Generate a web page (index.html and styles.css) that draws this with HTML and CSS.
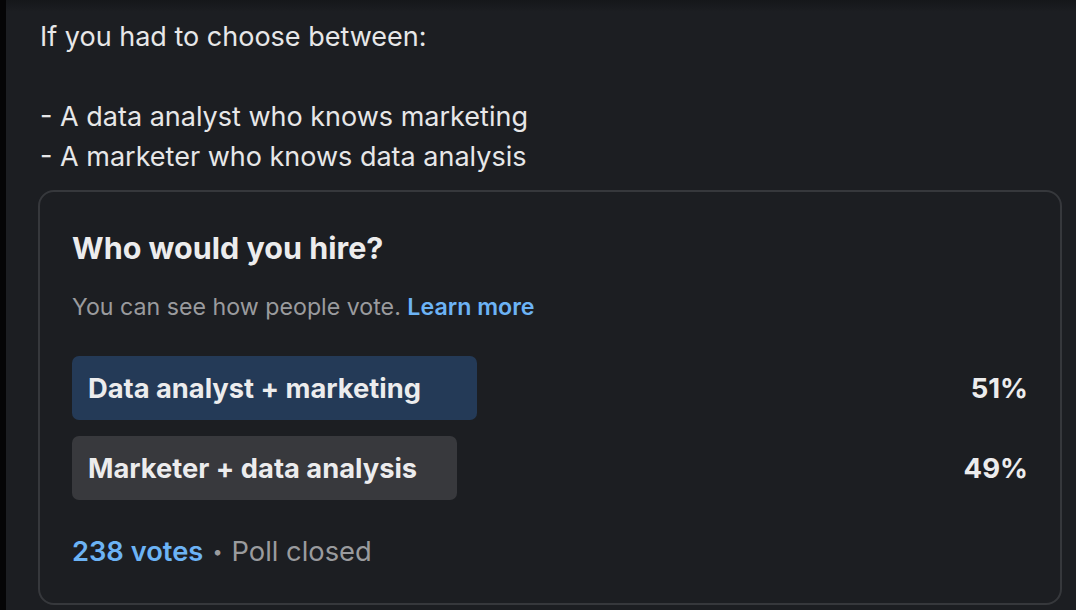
FILE: index.html
```html
<!DOCTYPE html>
<html lang="en">
<head>
<meta charset="utf-8">
<link rel="stylesheet" href="styles.css">
</head>
<body>
<div class="page">
  <div class="edge"></div>
  <main class="post">
    <p class="post-text">If you had to choose between:<br><br>- A data analyst who knows marketing<br>- A marketer who knows data analysis</p>
    <section class="poll">
      <h2 class="poll-title">Who would you hire?</h2>
      <p class="poll-note">You can see how people vote. <a class="link" href="#">Learn more</a></p>
      <div class="options">
        <div class="option">
          <div class="bar bar-lead" style="width:405px">Data analyst + marketing</div>
          <span class="pct">51%</span>
        </div>
        <div class="option">
          <div class="bar bar-other" style="width:385px">Marketer + data analysis</div>
          <span class="pct">49%</span>
        </div>
      </div>
      <p class="poll-foot"><span class="votes">238 votes</span><span class="dot">•</span><span class="closed">Poll closed</span></p>
    </section>
  </main>
</div>
</body>
</html>
```

FILE: styles.css
```css
* { box-sizing: border-box; }
html, body {
  margin: 0;
  height: 100%;
  background: #1c1e22;
  font-family: Inter, "Noto Sans", sans-serif;
  color: #e9e9ea;
}
.page {
  display: flex;
  height: 610px;
  overflow: hidden;
  background: linear-gradient(to bottom, #15171a 0px, #1c1e22 12px);
}
.edge {
  width: 6px;
  flex: none;
  background: #050506;
}
.post {
  flex: 1;
  padding: 17px 14px 0 32px;
}
.post-text {
  margin: 0 0 13px 2px;
  font-size: 27px;
  line-height: 40px;
  color: #e7e7e8;
}
.poll {
  border: 2px solid #36383c;
  border-radius: 16px;
  padding: 38px 32px 31px 32px;
}
.poll-title {
  margin: 0;
  font-size: 30.5px;
  line-height: 36px;
  font-weight: 700;
  color: #ececed;
}
.poll-note {
  margin: 26px 0 0;
  font-size: 23.2px;
  line-height: 30px;
  color: #9a9b9e;
}
.link {
  color: #6cb3f5;
  font-weight: 600;
  text-decoration: none;
}
.options {
  display: flex;
  flex-direction: column;
  gap: 16px;
  margin-top: 34px;
}
.option {
  display: flex;
  align-items: center;
  justify-content: space-between;
}
.bar {
  height: 64px;
  border-radius: 7px;
  padding-left: 16px;
  display: flex;
  align-items: center;
  font-size: 27.3px;
  font-weight: 700;
  color: #ececed;
}
.bar-lead { background: #243a57; }
.bar-other { background: #38393d; }
.pct {
  font-size: 27.5px;
  font-weight: 700;
  color: #ececed;
}
.poll-foot {
  margin: 32px 0 0;
  font-size: 27.3px;
  line-height: 40px;
  color: #9a9b9e;
}
.votes { color: #6cb3f5; font-weight: 600; }
.dot { margin: 0 9px; font-size: 18px; vertical-align: 3px; }
```
